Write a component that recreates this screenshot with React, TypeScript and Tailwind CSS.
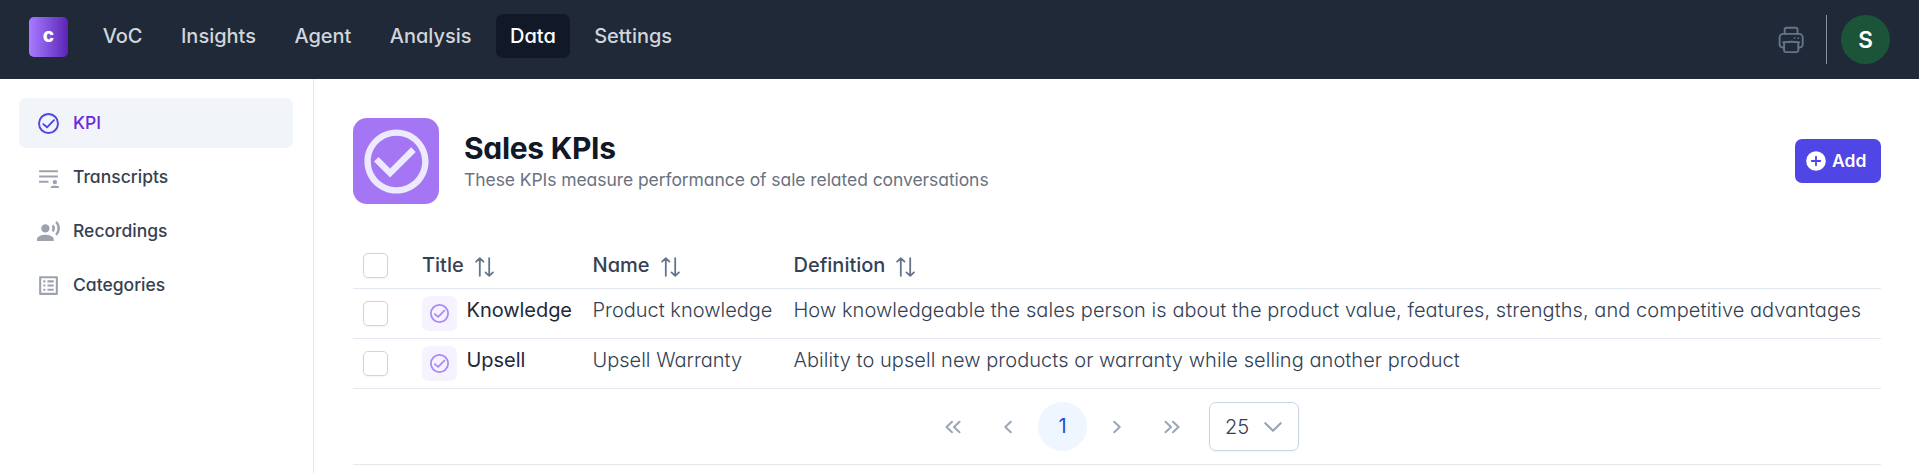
import type { ReactNode } from "react";
import { MdCheckCircleOutline, MdListAlt, MdRecordVoiceOver } from "react-icons/md";

const navItems = ["VoC", "Insights", "Agent", "Analysis", "Data", "Settings"];

function CheckCircle({ className }: { className: string }) {
  return (
    <svg viewBox="0 0 21 21" fill="none" stroke="currentColor" strokeWidth="1.9" className={className}>
      <circle cx="10.5" cy="10.5" r="9.5" />
      <path d="M5.3 11.1 9 14.3 16 7.2" strokeLinecap="round" strokeLinejoin="round" />
    </svg>
  );
}

function TranscriptIcon() {
  return (
    <svg viewBox="0 0 24 24" fill="currentColor" className="size-[25px]">
      <path d="M3 5h18v2H3zM3 10h18v2H3zM3 15h9v2H3zM14 22v-.6c0-1.1 2.4-1.8 4.1-1.8s4.1.7 4.1 1.8v.6z" />
      <circle cx="18.1" cy="16.4" r="2.1" />
    </svg>
  );
}

function PrinterIcon() {
  return (
    <svg viewBox="0 0 26 28" fill="none" stroke="currentColor" strokeWidth="1.9" strokeLinejoin="round" strokeLinecap="round" className="h-7 w-[26px]">
      <path d="M6.7 7.7V3.5a1.8 1.8 0 0 1 1.8-1.8h9.2a1.8 1.8 0 0 1 1.8 1.8v4.2" />
      <path d="M5.8 21.5H4.6a3 3 0 0 1-3-3v-7a3.6 3.6 0 0 1 3.6-3.6h15.9a3.6 3.6 0 0 1 3.6 3.6v7a3 3 0 0 1-3 3h-1.3" />
      <path d="M6.1 16.3v8a1.8 1.8 0 0 0 1.8 1.8h10.6a1.8 1.8 0 0 0 1.8-1.8v-8M5.2 16.4q8-1.3 16 0" />
      <path d="M16.5 12h.2M20.2 12h.2" strokeWidth="1.7" />
    </svg>
  );
}

function SortIcon() {
  return (
    <svg viewBox="0 0 19 20" fill="none" stroke="#64748b" strokeWidth="1.8" strokeLinecap="round" strokeLinejoin="round" className="ml-[11px] h-5 w-[19px] translate-y-0.5">
      <path d="M4.8 18.8V1.2M1.1 4.6l3.7-3.4 3.7 3.4M14.2 1.2v17.6M10.5 15.4l3.7 3.4 3.7-3.4" />
    </svg>
  );
}

function Chevrons({ d, className }: { d: string; className: string }) {
  return (
    <svg viewBox="0 0 16 14" fill="none" stroke="#9ba8ba" strokeWidth="2.1" strokeLinecap="round" strokeLinejoin="round" className={className}>
      <path d={d} />
    </svg>
  );
}

function SideItem({ icon, label, active = false }: { icon: ReactNode; label: string; active?: boolean }) {
  return (
    <a className={`flex h-[50px] items-center gap-3 rounded-[7px] pl-[17px] text-[17.5px] font-medium ${active ? "bg-[#f1f5f9] text-[#6d28d9]" : "text-[#374151]"}`}>
      <span className={`flex size-[25px] items-center justify-center ${active ? "text-[#4f46e5]" : "text-[#9ca3af]"}`}>{icon}</span>
      {label}
    </a>
  );
}

function Checkbox() {
  return <span className="block size-[25px] rounded-[5px] border border-[#cbd5e1] bg-white shadow-[0_1px_2px_rgba(18,18,23,0.05)]" />;
}

function HeadCell({ label }: { label: string }) {
  return (
    <div className="flex items-center pb-0.5 font-medium">
      {label}
      <SortIcon />
    </div>
  );
}

function Row({ title, name, definition }: { title: string; name: string; definition: string }) {
  return (
    <div className="grid h-[50px] grid-cols-[59px_170.5px_201px_1fr] items-center border-b border-[#e2e8f0] pl-2.5">
      <Checkbox />
      <div className="flex items-center gap-[9.5px]">
        <span className="flex size-[35px] items-center justify-center rounded-[7px] bg-[#f5f3ff] text-[#a984fa]">
          <CheckCircle className="size-[19px]" />
        </span>
        <span className="pb-[7px] font-normal tracking-[-0.05px] text-[#1e293b]">{title}</span>
      </div>
      <div className="pb-[7px] font-light">{name}</div>
      <div className="pb-[7px] font-light tracking-[0.055px] whitespace-nowrap">{definition}</div>
    </div>
  );
}

export default function App() {
  return (
    <div className="flex h-[473px] w-full flex-col overflow-hidden bg-white font-[Inter,sans-serif] text-[20px] leading-7 text-[#334155] [font-feature-settings:'cv11']">
      <header className="flex h-[79px] shrink-0 items-start justify-between bg-[#1f2937] pr-[29px] pl-[29px]">
        <div className="flex items-start">
          <div className="mt-[17px] flex h-10 w-[39px] items-center justify-center rounded-[5px] bg-linear-to-r from-[#a97bff] to-[#5b21b6] pb-[3px] text-[19px] font-extrabold text-white">
            c
          </div>
          <nav className="mt-3.5 ml-[20.5px] flex gap-2.5">
            {navItems.map((item) => (
              <a
                key={item}
                className={`flex h-11 items-center rounded-[7px] px-[14.2px] font-medium ${item === "Data" ? "bg-[#111827] text-white" : "text-[#d1d5db]"}`}
              >
                {item}
              </a>
            ))}
          </nav>
        </div>
        <div className="mt-[15px] flex h-[49px] items-center">
          <span className="text-[#64748b]">
            <PrinterIcon />
          </span>
          <span className="mr-3.5 ml-[22px] h-[49px] w-px bg-[#8792a3]" />
          <span className="flex size-[49px] items-center justify-center rounded-full bg-[#1c543a] text-[22.5px] font-semibold text-white">S</span>
        </div>
      </header>

      <div className="flex min-h-0 flex-1">
        <aside className="flex w-[314px] shrink-0 flex-col gap-1 border-r border-[#e5e7eb] pt-[19px] pr-5 pl-[19px]">
          <SideItem active icon={<CheckCircle className="size-[21px]" />} label="KPI" />
          <SideItem icon={<TranscriptIcon />} label="Transcripts" />
          <SideItem icon={<MdRecordVoiceOver className="size-[25px]" />} label="Recordings" />
          <SideItem icon={<MdListAlt className="size-[25px]" />} label="Categories" />
        </aside>

        <main className="flex min-w-0 flex-1 flex-col pt-[39px] pr-[38px] pl-[39px]">
          <div className="flex h-[86px] items-center">
            <span className="flex size-[86px] items-center justify-center rounded-[14px] bg-[#a576f3] text-[#ede9fe]">
              <MdCheckCircleOutline className="size-[77px]" />
            </span>
            <div className="ml-[25px] flex flex-1 flex-col pt-0.5">
              <h1 className="text-[30px] leading-9 font-bold tracking-[-0.3px] text-[#111827]">Sales KPIs</h1>
              <p className="text-[17.5px] leading-7 tracking-[-0.07px] text-[#6b7280]">
                These KPIs measure performance of sale related conversations
              </p>
            </div>
            <button className="flex h-11 w-[86px] items-center rounded-[7px] bg-[#4f46e5] pl-[10.5px] text-[17.5px] font-semibold text-white">
              <svg viewBox="0 0 20 20" className="mr-[6.5px] size-5">
                <circle cx="10" cy="10" r="9.8" fill="#ffffff" />
                <path d="M10 5.7v8.6M5.7 10h8.6" stroke="#4f46e5" strokeWidth="1.8" strokeLinecap="round" />
              </svg>
              Add
            </button>
          </div>

          <div className="mt-[39px] grid h-[46px] grid-cols-[59px_170.5px_201px_1fr] items-center border-b border-[#e2e8f0] pl-2.5">
            <Checkbox />
            <HeadCell label="Title" />
            <HeadCell label="Name" />
            <HeadCell label="Definition" />
          </div>
          <Row
            title="Knowledge"
            name="Product knowledge"
            definition="How knowledgeable the sales person is about the product value, features, strengths, and competitive advantages"
          />
          <Row title="Upsell" name="Upsell Warranty" definition="Ability to upsell new products or warranty while selling another product" />

          <div className="flex h-[76px] items-center border-b border-[#e5e7eb] pl-[592px]">
            <Chevrons className="h-3.5 w-4" d="M7 1.8 1.5 7 7 12.2M14.5 1.8 9 7l5.5 5.2" />
            <Chevrons className="ml-[39px] h-3.5 w-4" d="M10.8 1.8 5.3 7l5.5 5.2" />
            <span className="ml-[22px] flex size-[49px] items-center justify-center rounded-full bg-[#eff6ff] pb-px font-normal text-[#1d4ed8]">1</span>
            <Chevrons className="ml-[22px] h-3.5 w-4" d="M5.2 1.8 10.7 7l-5.5 5.2" />
            <Chevrons className="ml-[39px] h-3.5 w-4" d="M1.5 1.8 7 7l-5.5 5.2M9 1.8 14.5 7 9 12.2" />
            <div className="ml-[29px] flex h-[49px] w-[90px] items-center justify-between rounded-[7px] border border-[#cbd5e1] pr-4 pl-[15px] font-light shadow-[0_1px_2px_rgba(18,18,23,0.05)]">
              25
              <svg viewBox="0 0 18 10" fill="none" stroke="#94a3b8" strokeWidth="2.1" strokeLinecap="round" strokeLinejoin="round" className="h-2.5 w-[18px]">
                <path d="M1.3 1.2 9 8.7l7.7-7.5" />
              </svg>
            </div>
          </div>
        </main>
      </div>
    </div>
  );
}
